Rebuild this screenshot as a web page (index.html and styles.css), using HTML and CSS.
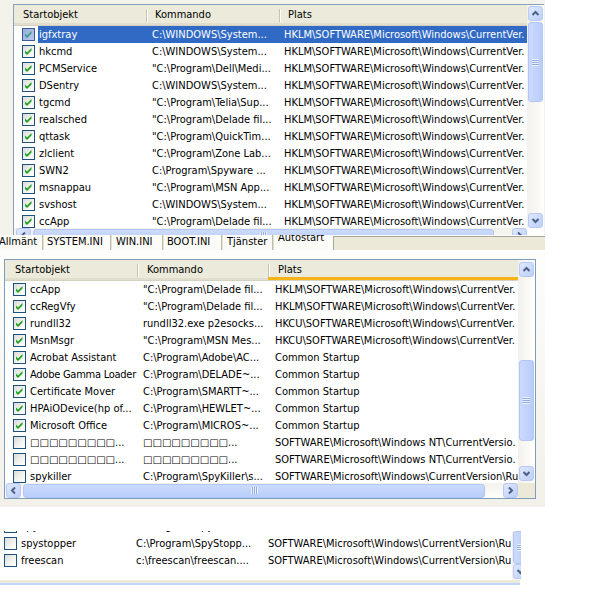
FILE: index.html
```html
<!DOCTYPE html>
<html>
<head>
<meta charset="utf-8">
<link rel="stylesheet" href="styles.css">
</head>
<body>
<div class="p1">
  <div class="lv lv1">
    <div class="lvmain">
      <div class="hdr">
        <div class="hc">Startobjekt</div><div class="hc">Kommando</div><div class="hc">Plats</div>
      </div>
      <div class="body">
        <div class="row sel"><div class="c1"><span class="cb on"><svg width="11" height="11" viewBox="0 0 11 11"><path d="M2 4.5L4 6.5L8.5 2V4.5L4 9L2 7Z"/></svg></span><span class="name">igfxtray</span></div><div class="c2">C:\WINDOWS\System...</div><div class="c3">HKLM\SOFTWARE\Microsoft\Windows\CurrentVer.</div></div>
        <div class="row"><div class="c1"><span class="cb on"><svg width="11" height="11" viewBox="0 0 11 11"><path d="M2 4.5L4 6.5L8.5 2V4.5L4 9L2 7Z"/></svg></span><span class="name">hkcmd</span></div><div class="c2">C:\WINDOWS\System...</div><div class="c3">HKLM\SOFTWARE\Microsoft\Windows\CurrentVer.</div></div>
        <div class="row"><div class="c1"><span class="cb on"><svg width="11" height="11" viewBox="0 0 11 11"><path d="M2 4.5L4 6.5L8.5 2V4.5L4 9L2 7Z"/></svg></span><span class="name">PCMService</span></div><div class="c2">"C:\Program\Dell\Medi...</div><div class="c3">HKLM\SOFTWARE\Microsoft\Windows\CurrentVer.</div></div>
        <div class="row"><div class="c1"><span class="cb on"><svg width="11" height="11" viewBox="0 0 11 11"><path d="M2 4.5L4 6.5L8.5 2V4.5L4 9L2 7Z"/></svg></span><span class="name">DSentry</span></div><div class="c2">C:\WINDOWS\System...</div><div class="c3">HKLM\SOFTWARE\Microsoft\Windows\CurrentVer.</div></div>
        <div class="row"><div class="c1"><span class="cb on"><svg width="11" height="11" viewBox="0 0 11 11"><path d="M2 4.5L4 6.5L8.5 2V4.5L4 9L2 7Z"/></svg></span><span class="name">tgcmd</span></div><div class="c2">"C:\Program\Telia\Sup...</div><div class="c3">HKLM\SOFTWARE\Microsoft\Windows\CurrentVer.</div></div>
        <div class="row"><div class="c1"><span class="cb on"><svg width="11" height="11" viewBox="0 0 11 11"><path d="M2 4.5L4 6.5L8.5 2V4.5L4 9L2 7Z"/></svg></span><span class="name">realsched</span></div><div class="c2">"C:\Program\Delade fil...</div><div class="c3">HKLM\SOFTWARE\Microsoft\Windows\CurrentVer.</div></div>
        <div class="row"><div class="c1"><span class="cb on"><svg width="11" height="11" viewBox="0 0 11 11"><path d="M2 4.5L4 6.5L8.5 2V4.5L4 9L2 7Z"/></svg></span><span class="name">qttask</span></div><div class="c2">"C:\Program\QuickTim...</div><div class="c3">HKLM\SOFTWARE\Microsoft\Windows\CurrentVer.</div></div>
        <div class="row"><div class="c1"><span class="cb on"><svg width="11" height="11" viewBox="0 0 11 11"><path d="M2 4.5L4 6.5L8.5 2V4.5L4 9L2 7Z"/></svg></span><span class="name">zlclient</span></div><div class="c2">"C:\Program\Zone Lab...</div><div class="c3">HKLM\SOFTWARE\Microsoft\Windows\CurrentVer.</div></div>
        <div class="row"><div class="c1"><span class="cb on"><svg width="11" height="11" viewBox="0 0 11 11"><path d="M2 4.5L4 6.5L8.5 2V4.5L4 9L2 7Z"/></svg></span><span class="name">SWN2</span></div><div class="c2">C:\Program\Spyware ...</div><div class="c3">HKLM\SOFTWARE\Microsoft\Windows\CurrentVer.</div></div>
        <div class="row"><div class="c1"><span class="cb on"><svg width="11" height="11" viewBox="0 0 11 11"><path d="M2 4.5L4 6.5L8.5 2V4.5L4 9L2 7Z"/></svg></span><span class="name">msnappau</span></div><div class="c2">"C:\Program\MSN App...</div><div class="c3">HKLM\SOFTWARE\Microsoft\Windows\CurrentVer.</div></div>
        <div class="row"><div class="c1"><span class="cb on"><svg width="11" height="11" viewBox="0 0 11 11"><path d="M2 4.5L4 6.5L8.5 2V4.5L4 9L2 7Z"/></svg></span><span class="name">svshost</span></div><div class="c2">C:\WINDOWS\System...</div><div class="c3">HKLM\SOFTWARE\Microsoft\Windows\CurrentVer.</div></div>
        <div class="row"><div class="c1"><span class="cb on"><svg width="11" height="11" viewBox="0 0 11 11"><path d="M2 4.5L4 6.5L8.5 2V4.5L4 9L2 7Z"/></svg></span><span class="name">ccApp</span></div><div class="c2">"C:\Program\Delade fil...</div><div class="c3">HKLM\SOFTWARE\Microsoft\Windows\CurrentVer.</div></div>
      </div>
      <div class="hs">
        <span class="sbtn"><svg width="9" height="9" viewBox="0 0 9 9"><path d="M6 1.5L3 4.5L6 7.5"/></svg></span>
        <span class="hthumb t1"><span class="grip"></span></span>
        <span class="sp"></span>
        <span class="sbtn"><svg width="9" height="9" viewBox="0 0 9 9"><path d="M3 1.5L6 4.5L3 7.5"/></svg></span>
      </div>
    </div>
    <div class="vs">
      <span class="sbtn"><svg width="9" height="9" viewBox="0 0 9 9"><path d="M1.5 6L4.5 3L7.5 6"/></svg></span>
      <span class="vthumb t1"><span class="grip"></span></span>
      <span class="sp"></span>
      <span class="sbtn"><svg width="9" height="9" viewBox="0 0 9 9"><path d="M1.5 3L4.5 6L7.5 3"/></svg></span>
      <span class="corner"></span>
    </div>
  </div>
</div>

<div class="tabs">
  <div class="tab first">Allmänt</div>
  <div class="tab">SYSTEM.INI</div>
  <div class="tab">WIN.INI</div>
  <div class="tab">BOOT.INI</div>
  <div class="tab">Tjänster</div>
  <div class="tab act">Autostart</div>
  <div class="tabrest"></div>
</div>

<div class="p2">
  <div class="lv lv2">
    <div class="lvmain">
      <div class="hdr">
        <div class="hc">Startobjekt</div><div class="hc">Kommando</div><div class="hc hot">Plats</div>
      </div>
      <div class="body">
        <div class="row"><div class="c1"><span class="cb on"><svg width="11" height="11" viewBox="0 0 11 11"><path d="M2 4.5L4 6.5L8.5 2V4.5L4 9L2 7Z"/></svg></span><span class="name">ccApp</span></div><div class="c2">"C:\Program\Delade fil...</div><div class="c3">HKLM\SOFTWARE\Microsoft\Windows\CurrentVer.</div></div>
        <div class="row"><div class="c1"><span class="cb on"><svg width="11" height="11" viewBox="0 0 11 11"><path d="M2 4.5L4 6.5L8.5 2V4.5L4 9L2 7Z"/></svg></span><span class="name">ccRegVfy</span></div><div class="c2">"C:\Program\Delade fil...</div><div class="c3">HKLM\SOFTWARE\Microsoft\Windows\CurrentVer.</div></div>
        <div class="row"><div class="c1"><span class="cb on"><svg width="11" height="11" viewBox="0 0 11 11"><path d="M2 4.5L4 6.5L8.5 2V4.5L4 9L2 7Z"/></svg></span><span class="name">rundll32</span></div><div class="c2">rundll32.exe p2esocks...</div><div class="c3">HKCU\SOFTWARE\Microsoft\Windows\CurrentVer.</div></div>
        <div class="row"><div class="c1"><span class="cb on"><svg width="11" height="11" viewBox="0 0 11 11"><path d="M2 4.5L4 6.5L8.5 2V4.5L4 9L2 7Z"/></svg></span><span class="name">MsnMsgr</span></div><div class="c2">"C:\Program\MSN Mes...</div><div class="c3">HKCU\SOFTWARE\Microsoft\Windows\CurrentVer.</div></div>
        <div class="row"><div class="c1"><span class="cb on"><svg width="11" height="11" viewBox="0 0 11 11"><path d="M2 4.5L4 6.5L8.5 2V4.5L4 9L2 7Z"/></svg></span><span class="name">Acrobat Assistant</span></div><div class="c2">C:\Program\Adobe\AC...</div><div class="c3">Common Startup</div></div>
        <div class="row"><div class="c1"><span class="cb on"><svg width="11" height="11" viewBox="0 0 11 11"><path d="M2 4.5L4 6.5L8.5 2V4.5L4 9L2 7Z"/></svg></span><span class="name tight">Adobe Gamma Loader</span></div><div class="c2">C:\Program\DELADE~...</div><div class="c3">Common Startup</div></div>
        <div class="row"><div class="c1"><span class="cb on"><svg width="11" height="11" viewBox="0 0 11 11"><path d="M2 4.5L4 6.5L8.5 2V4.5L4 9L2 7Z"/></svg></span><span class="name">Certificate Mover</span></div><div class="c2">C:\Program\SMARTT~...</div><div class="c3">Common Startup</div></div>
        <div class="row"><div class="c1"><span class="cb on"><svg width="11" height="11" viewBox="0 0 11 11"><path d="M2 4.5L4 6.5L8.5 2V4.5L4 9L2 7Z"/></svg></span><span class="name">HPAiODevice(hp of...</span></div><div class="c2">C:\Program\HEWLET~...</div><div class="c3">Common Startup</div></div>
        <div class="row"><div class="c1"><span class="cb on"><svg width="11" height="11" viewBox="0 0 11 11"><path d="M2 4.5L4 6.5L8.5 2V4.5L4 9L2 7Z"/></svg></span><span class="name">Microsoft Office</span></div><div class="c2">C:\Program\MICROS~...</div><div class="c3">Common Startup</div></div>
        <div class="row"><div class="c1"><span class="cb"></span><span class="name"><span class="sq">□□□□□□□□□</span>...</span></div><div class="c2"><span class="sq">□□□□□□□□□</span>...</div><div class="c3">SOFTWARE\Microsoft\Windows NT\CurrentVersio.</div></div>
        <div class="row"><div class="c1"><span class="cb"></span><span class="name"><span class="sq">□□□□□□□□□</span>...</span></div><div class="c2"><span class="sq">□□□□□□□□□</span>...</div><div class="c3">SOFTWARE\Microsoft\Windows NT\CurrentVersio.</div></div>
        <div class="row"><div class="c1"><span class="cb"></span><span class="name">spykiller</span></div><div class="c2">C:\Program\SpyKiller\s...</div><div class="c3">SOFTWARE\Microsoft\Windows\CurrentVersion\Ru</div></div>
      </div>
      <div class="hs">
        <span class="sbtn"><svg width="9" height="9" viewBox="0 0 9 9"><path d="M6 1.5L3 4.5L6 7.5"/></svg></span>
        <span class="hthumb t2"><span class="grip"></span></span>
        <span class="sp"></span>
        <span class="sbtn"><svg width="9" height="9" viewBox="0 0 9 9"><path d="M3 1.5L6 4.5L3 7.5"/></svg></span>
      </div>
    </div>
    <div class="vs">
      <span class="sbtn"><svg width="9" height="9" viewBox="0 0 9 9"><path d="M1.5 6L4.5 3L7.5 6"/></svg></span>
      <span class="vthumb t2"><span class="grip"></span></span>
      <span class="sp"></span>
      <span class="sbtn"><svg width="9" height="9" viewBox="0 0 9 9"><path d="M1.5 3L4.5 6L7.5 3"/></svg></span>
      <span class="corner"></span>
    </div>
  </div>
</div>

<div class="p3">
  <div class="clip">
    <div class="lvmain3">
      <div class="rows3">
        <div class="row"><div class="c1"><span class="cb"></span><span class="name">spybot</span></div><div class="c2">C:\Program\Spybot - S...</div><div class="c3">SOFTWARE\Microsoft\Windows\CurrentVersion\Ru</div></div>
        <div class="row"><div class="c1"><span class="cb"></span><span class="name">spystopper</span></div><div class="c2">C:\Program\SpyStopp...</div><div class="c3">SOFTWARE\Microsoft\Windows\CurrentVersion\Ru</div></div>
        <div class="row"><div class="c1"><span class="cb"></span><span class="name">freescan</span></div><div class="c2">c:\freescan\freescan....</div><div class="c3">SOFTWARE\Microsoft\Windows\CurrentVersion\Ru</div></div>
      </div>
    </div>
    <div class="vs vs3">
      <span class="vthumb t3"><span class="grip"></span></span>
      <span class="sp"></span>
      <span class="sbtn"><svg width="9" height="9" viewBox="0 0 9 9"><path d="M1.5 3L4.5 6L7.5 3"/></svg></span>
    </div>
  </div>
  <div class="foot"></div>
</div>
</body>
</html>
```
FILE: styles.css
```css
* { box-sizing: border-box; }
html, body { margin: 0; padding: 0; background: #ffffff; }
body {
  width: 600px; height: 600px; overflow: hidden;
  font-family: "DejaVu Sans Condensed", "DejaVu Sans", sans-serif;
  font-stretch: condensed;
  font-size: 11px; color: #000;
}

/* ---------- generic list view ---------- */
.lv { display: flex; background: #fff; }
.lvmain { width: 513px; display: flex; flex-direction: column; overflow: hidden; }
.hdr {
  height: 21px; flex: none; display: grid;
  grid-template-columns: var(--c1) var(--c2) 1fr;
  background: #ebeadb;
  border-bottom: 1px solid #d6d2c2;
  box-shadow: inset 0 -2px 0 #e2decd;
}
.hc { position: relative; line-height: 20px; padding-left: var(--hp); white-space: nowrap; }
.hc + .hc::before {
  content: ""; position: absolute; left: 0; top: 4px; height: 13px; width: 1px;
  background: #c7c5b2; box-shadow: 1px 0 0 #fff;
}
.hc.hot { box-shadow: inset 0 -3px 0 #f8b319; }
.body { height: 202px; flex: none; overflow: hidden; background: #fff; }
.row {
  height: 17px; display: grid;
  grid-template-columns: var(--c1) var(--c2) 1fr;
  white-space: nowrap; line-height: 17px;
}
.c1 { display: flex; align-items: center; padding-left: var(--cbp); overflow: hidden; }
.c2 { padding-left: var(--p2); overflow: hidden; }
.c3 { padding-left: var(--p3); overflow: hidden; }
.name { flex: 1; margin-left: 3px; padding-left: 1px; overflow: hidden; }
.name.tight { letter-spacing: -0.25px; }
.row.sel .name, .row.sel .c2, .row.sel .c3 { background: #316ac5; color: #fff; }

.cb {
  width: 13px; height: 13px; flex: none; display: flex; align-items: center; justify-content: center;
  border: 1px solid #1c5180;
  background: linear-gradient(135deg, #dcdcd7 0%, #f4f4f0 60%, #ffffff 100%);
}
.cb svg path { fill: #21a121; }
.row.sel .cb { background: linear-gradient(135deg, #97acdc, #bccbee); border-color: #3a5a95; }
.row.sel .cb svg path { fill: #3f9e84; }
.sq { font-family: "DejaVu Sans", sans-serif; font-stretch: normal; font-size: 10px; letter-spacing: 0; }

/* ---------- scrollbars ---------- */
.vs {
  width: 17px; flex: none; display: flex; flex-direction: column; align-items: center;
  background: linear-gradient(90deg, #f3f1ec, #fefefb);
  padding: 1px 0 0 0;
}
.hs {
  height: 15px; flex: none; display: flex; align-items: center;
  background: linear-gradient(#f3f1ec, #fefefb);
  padding-left: 2px;
}
.sbtn {
  width: 15px; height: 15px; flex: none; display: flex; align-items: center; justify-content: center;
  border: 1px solid #b7c9f4; border-radius: 3px;
  background: linear-gradient(135deg, #dfe8fd, #bccff9);
}
.sbtn svg path { fill: none; stroke: #4d6185; stroke-width: 2; }
.sp { flex: 1; }
.vthumb, .hthumb {
  flex: none; display: flex; align-items: center; justify-content: center;
  border: 1px solid #b2c6f5; border-radius: 3px;
}
.vthumb { width: 15px; background: linear-gradient(90deg, #cbdafd, #b9cdfa); }
.hthumb { height: 14px; background: linear-gradient(#cbdafd, #b9cdfa); margin-left: 2px; }
.vthumb .grip {
  width: 7px; height: 7px;
  background: repeating-linear-gradient(#eef3fe 0 1px, #8faae6 1px 2px);
}
.hthumb .grip {
  width: 7px; height: 7px;
  background: repeating-linear-gradient(90deg, #eef3fe 0 1px, #8faae6 1px 2px);
}
.corner { width: 17px; height: 15px; flex: none; background: #ece9d8; margin-top: 2px; }

/* ---------- panel 1 ---------- */
.p1 {
  width: 545px; height: 235px; overflow: hidden;
  background: #f3f2eb; padding: 4px 0 0 13px;
}
.lv1 {
  --c1: 132px; --c2: 133px; --hp: 9px; --cbp: 8px; --p2: 6px; --p3: 5px;
  border-left: 1px solid #8aa0bb; border-top: 1px solid #8aa0bb;
  width: 531px; height: 250px;
}
.lv1 .vs { height: 223px; }
.lv1 .corner { display: none; }
.t1.vthumb { height: 80px; margin-top: 1px; }
.t1.hthumb { width: 461px; }

/* ---------- tabs ---------- */
.tabs {
  width: 545px; height: 15px; overflow: hidden; display: grid;
  grid-template-columns: 43px 68px 52px 59px 51px 60px 1fr;
  background: #fbfbf8; align-items: start;
}
.tab { line-height: 13px; padding-left: 4px; height: 15px; white-space: nowrap; border-right: 1px solid #bdbbac; box-shadow: 1px 0 0 #e4e2d6; }
.tab.first { padding-left: 0; margin-left: -1px; }
.tab:nth-child(3), .tab:nth-child(5) { padding-left: 5px; }
.tab.act { margin-top: -4px; padding-left: 5px; border-right: none; box-shadow: none; }
.tabrest { height: 15px; margin-top: 1px; background: #ece9d8; border-top: 1px solid #a8a89c; border-left: 1px solid #a8a89c; }

/* ---------- panel 2 ---------- */
.p2 {
  width: 545px; height: 257px;
  background: linear-gradient(#fdfdfc, #f1f0e9);
  padding: 9px 0 0 4px;
}
.lv2 {
  --c1: 132px; --c2: 131px; --hp: 10px; --cbp: 8px; --p2: 6px; --p3: 7px;
  border: 1px solid #7f9db9; width: 532px; height: 240px;
}
.lv2 .vs { height: 238px; padding-top: 2px; }
.t2.vthumb { height: 81px; margin-top: 83px; }
.t2.hthumb { width: 462px; }
.lv2 .hs { padding-left: 1px; }

/* ---------- panel 3 ---------- */
.p3 { width: 600px; padding-top: 24px; background: #fff; }
.clip { width: 521px; height: 49px; overflow: hidden; display: flex; }
.lvmain3 { width: 512px; flex: none; overflow: hidden;
  --c1: 130px; --c2: 133px; --cbp: 4px; --p2: 6px; --p3: 5px; }
.rows3 { margin-top: -13px; }
.vs3 { height: 49px; padding-top: 0; }
.t3.vthumb { height: 33px; }
.vs3 .sbtn { margin-bottom: 1px; }
.foot {
  width: 520px; height: 5px;
  background: linear-gradient(#ecead9 0 3px, #c6d5fb 3px 5px);
}
```
